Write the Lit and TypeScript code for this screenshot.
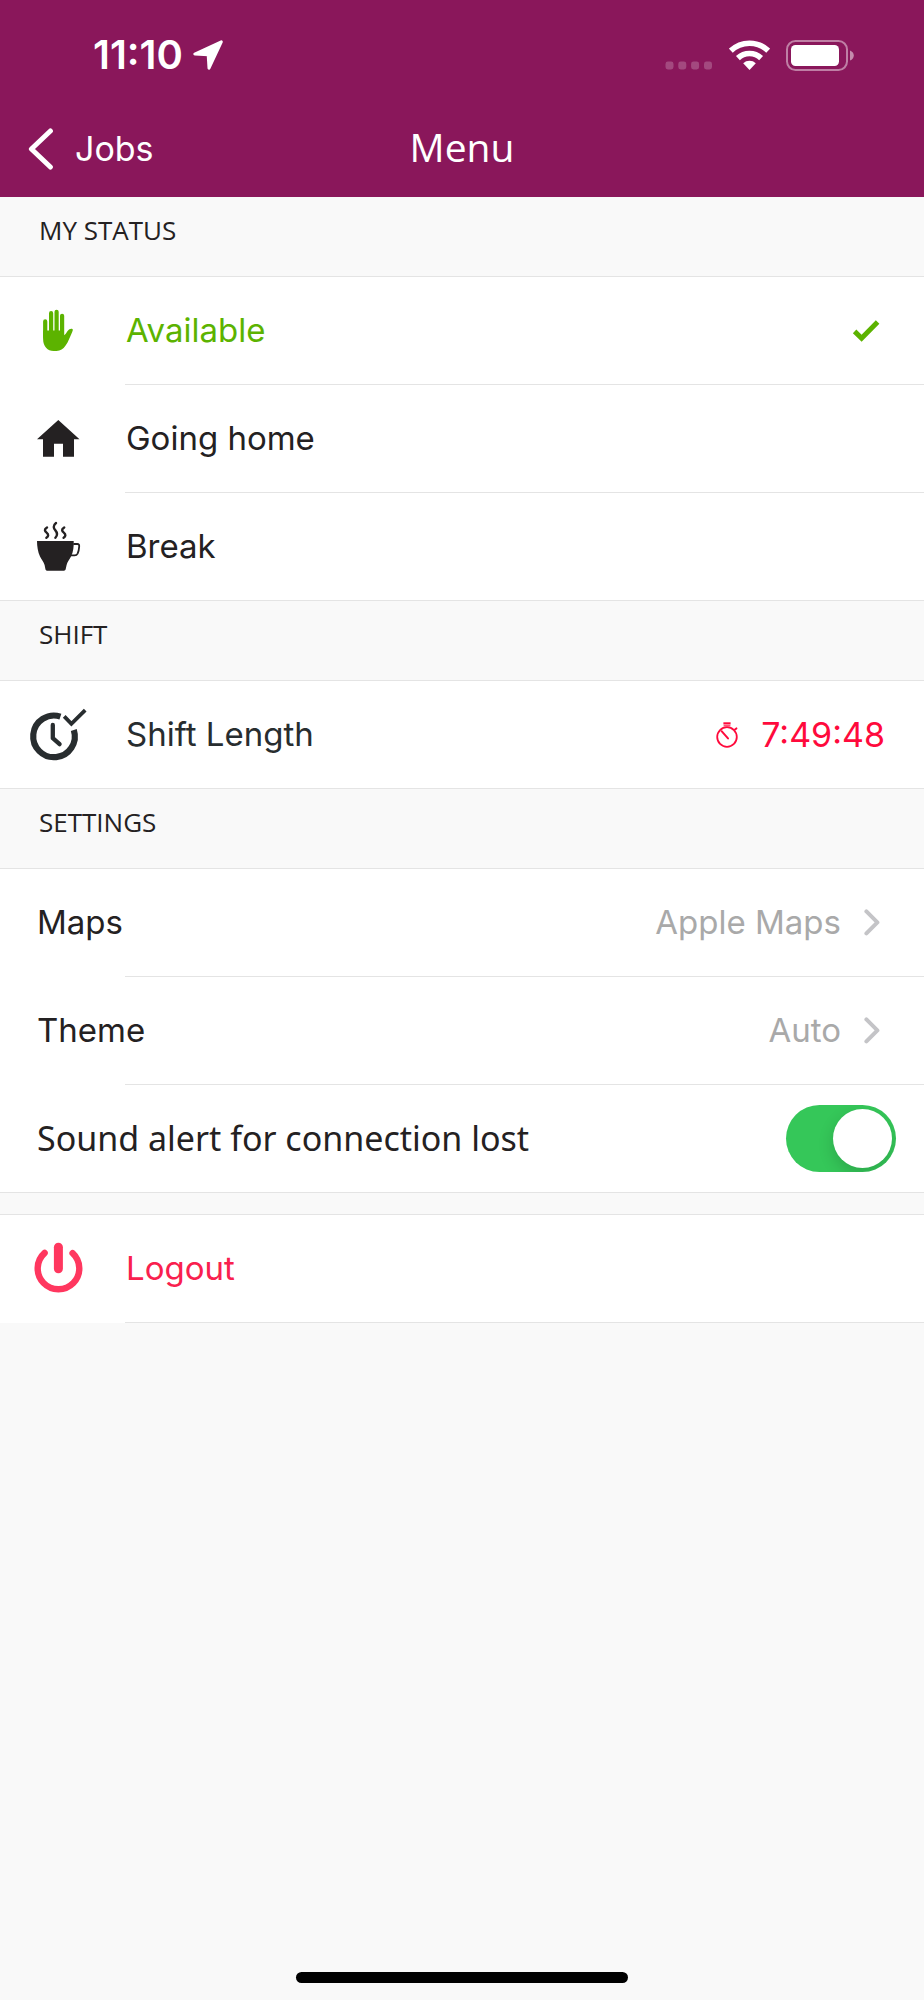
import { LitElement, html, svg, css, nothing } from "lit";
import { customElement, state } from "lit/decorators.js";

const icons = {
  hand: svg`
    <g fill="none" stroke="currentColor" stroke-width="4.2" stroke-linecap="round">
      <path d="M17.2 20.4V36M23.1 12.2V36M28.6 10.8V36M34.1 14.8V36" />
    </g>
    <path fill="currentColor" d="M15.1 29.4H36V34.2C37.4 33.6 38.6 31.6 39.8 29.8C41 28 43 27.4 44.4 28C45.2 28.5 44.7 29.8 44.2 31C42.4 35.2 40.4 40.6 37.6 44.6C35 48.3 32.6 50 28.6 50H25.6C19.6 50 15.1 45.4 15.1 38Z" />`,
  home: svg`<path fill="currentColor" d="M30.3 11L51.5 30.3H46V47.7H35V34.7H26V47.7H15V30.3H9Z" />`,
  cup: svg`
    <path fill="currentColor" d="M9 24H45.7C45.9 29.4 45.4 35 43 39.6C41.4 43 39.4 45 38.6 48L37.6 52.6Q37.3 53.7 36 53.7H19Q17.7 53.7 17.5 52.6L16.6 48C15.6 45 13.6 43 12 39.6C9.9 35 9 29.4 9 24Z" />
    <g fill="none" stroke="currentColor" stroke-linecap="round">
      <path stroke-width="1.8" d="M46 27H49.4Q51.4 27 51.2 29.4C51 32.6 50.4 35 49.6 36.6Q48.6 38.4 46.6 38.4H43.6" />
      <path stroke-width="2.4" d="M19 10.4C15.8 12.4 16.8 14.2 18.6 15.6C20.8 17.4 20.6 19.4 18.4 20.8M28 6C24.6 8.6 25.6 11.4 27.4 13.4C29.6 16 29.4 18.6 27.4 20.8M36.2 10.4C33 12.4 34 14.2 35.8 15.6C38 17.4 37.8 19.4 35.6 20.8" />
    </g>`,
  shift: svg`
    <g fill="none" stroke="currentColor">
      <path stroke-width="6.2" d="M32.4 11.6A20.8 20.8 0 1 0 45.8 25" />
      <path stroke-width="4.3" stroke-linecap="round" stroke-linejoin="round" d="M24.8 20V33.2L31.6 39.2" />
      <path stroke-width="3.8" d="M36.2 11.4L43.4 18.8L57.2 5.2" />
    </g>`,
  power: svg`
    <g fill="none" stroke="currentColor" stroke-linecap="round">
      <path stroke-width="6.4" d="M16.6 14A20.8 20.8 0 1 0 44.6 14.2" />
      <path stroke-width="9" d="M30.4 8.2V29.8" />
    </g>`,
};

type Status = { id: string; label: string; icon: keyof typeof icons };

const STATUSES: Status[] = [
  { id: "available", label: "Available", icon: "hand" },
  { id: "home", label: "Going home", icon: "home" },
  { id: "break", label: "Break", icon: "cup" },
];

const SETTINGS = [
  { label: "Maps", value: "Apple Maps" },
  { label: "Theme", value: "Auto" },
];

const icon = (name: keyof typeof icons) =>
  html`<svg class="icon" viewBox="0 0 60 60" aria-hidden="true">${icons[name]}</svg>`;

@customElement("app-root")
export class AppRoot extends LitElement {
  @state() private status = "available";
  @state() private sound = true;

  static styles = css`
    :host {
      display: flex;
      flex-direction: column;
      min-height: 100vh;
      background: #f9f9f9;
      color: #242122;
      font-family: Inter, "Liberation Sans", sans-serif;
      font-size: 33px;
      line-height: 40px;
    }
    * {
      box-sizing: border-box;
    }
    svg {
      display: block;
      flex: none;
    }
    button,
    a {
      font: inherit;
      color: inherit;
      text-decoration: none;
      border: 0;
      margin: 0;
      cursor: pointer;
    }
    .top {
      background: #8a175b;
      color: #fff;
    }
    .status-bar {
      display: flex;
      align-items: center;
      justify-content: space-between;
      height: 100px;
      padding: 10px 70px 0 93px;
    }
    .time,
    .signals {
      display: flex;
      align-items: center;
    }
    .time {
      gap: 10px;
      font-size: 40px;
      font-weight: 600;
    }
    .signals {
      gap: 16px;
    }
    .nav {
      display: grid;
      grid-template-columns: 1fr auto 1fr;
      align-items: center;
      height: 97px;
      padding: 0 28px;
    }
    .back {
      display: flex;
      align-items: center;
      gap: 21px;
      font-size: 34px;
      justify-self: start;
    }
    .title {
      margin: 0;
      padding-bottom: 3px;
      font: 400 39px/48px "Open Sans", sans-serif;
    }
    .heading {
      margin: 0;
      height: 80px;
      padding: 16px 39px 0;
      border-bottom: 1px solid #e4e4e4;
      font: 400 26px/34px "Open Sans", sans-serif;
    }
    .row {
      display: flex;
      align-items: center;
      width: 100%;
      min-height: 108px;
      padding: 0 44px 1px 28px;
      text-align: left;
      background: linear-gradient(#e4e4e4, #e4e4e4) 125px 100% / 100% 1px no-repeat #fff;
    }
    .group .row:last-child {
      background-position: 0 100%;
    }
    .icon {
      width: 60px;
      height: 60px;
      margin-right: 38px;
    }
    .label,
    .value {
      padding-bottom: 1px;
    }
    .label {
      flex: 1;
    }
    .plain {
      padding-left: 37px;
    }
    .selected {
      color: #5cb300;
    }
    .shift {
      color: #282d2f;
      padding-right: 39px;
    }
    .timer {
      display: flex;
      align-items: center;
      gap: 23px;
      color: #ff0a3c;
      font-size: 34px;
    }
    .value {
      color: #a9a9a9;
      margin-right: 23px;
    }
    .sound {
      padding-right: 28px;
      font-family: "Noto Sans", sans-serif;
      font-size: 34px;
      cursor: pointer;
    }
    .switch {
      appearance: none;
      display: flex;
      align-items: center;
      width: 110px;
      height: 67px;
      margin: 0;
      padding: 4px;
      border-radius: 34px;
      background: #d8d8dc;
      overflow: hidden;
      cursor: pointer;
    }
    .switch::before {
      content: "";
      width: 59px;
      height: 59px;
      border-radius: 50%;
      background: #fff;
      box-shadow: 0 6px 16px rgba(0, 0, 0, 0.16);
    }
    .switch:checked {
      justify-content: flex-end;
      background: #35c759;
    }
    .spacer {
      height: 22px;
      border-bottom: 1px solid #e4e4e4;
    }
    .logout {
      color: #ff375f;
    }
    .logout .label {
      color: #f9204e;
    }
    .indicator {
      width: 36%;
      height: 11px;
      margin: auto auto 17px;
      border-radius: 6px;
      background: #000;
    }
  `;

  private renderTop() {
    return html`
      <header class="top">
        <div class="status-bar">
          <div class="time">
            <span>11:10</span>
            <svg width="30" height="30" viewBox="0 0 30 30" aria-hidden="true">
              <path fill="#fff" stroke="#fff" stroke-width="3" stroke-linejoin="round" d="M28.3 1.8L16 28.2L15.2 14.8L1.8 14Z" />
            </svg>
          </div>
          <div class="signals">
            <svg width="48" height="31" viewBox="0 0 48 31" aria-hidden="true">
              <g fill="#fff" fill-opacity="0.22">
                <rect x="0.5" y="21.5" width="8" height="8" rx="2.4" />
                <rect x="13.3" y="21.5" width="8" height="8" rx="2.4" />
                <rect x="26.1" y="21.5" width="8" height="8" rx="2.4" />
                <rect x="39" y="21.5" width="8" height="8" rx="2.4" />
              </g>
            </svg>
            <svg width="41" height="31" viewBox="0 0 41 31" aria-hidden="true">
              <g fill="none" stroke="#fff" stroke-width="5.6">
                <path d="M1.8 10.7A27 27 0 0 1 39.2 10.7" />
                <path d="M8.9 18.1A16.8 16.8 0 0 1 32.1 18.1" />
              </g>
              <path fill="#fff" d="M20.5 29.9L14.2 23.3A9.2 9.2 0 0 1 26.8 23.3Z" />
            </svg>
            <svg width="68" height="31" viewBox="0 0 68 31" aria-hidden="true">
              <rect x="1" y="1" width="60" height="29" rx="8.5" fill="none" stroke="#fff" stroke-opacity="0.45" stroke-width="2" />
              <rect x="5" y="5" width="48" height="21" rx="4.5" fill="#fff" />
              <path fill="#fff" fill-opacity="0.5" d="M64 10.4C66.4 11.4 67.8 13.2 67.8 15.5S66.4 19.6 64 20.6Z" />
            </svg>
          </div>
        </div>
        <nav class="nav">
          <a class="back" href="#jobs">
            <svg width="26" height="42" viewBox="0 0 26 42" aria-hidden="true">
              <path fill="none" stroke="#fff" stroke-width="5" stroke-linecap="round" stroke-linejoin="round" d="M22.4 3L3.4 21L22.4 39" />
            </svg>
            <span>Jobs</span>
          </a>
          <h1 class="title">Menu</h1>
        </nav>
      </header>
    `;
  }

  private renderStatus({ id, label, icon: name }: Status) {
    const on = this.status === id;
    return html`
      <button
        type="button"
        class="row ${on ? "selected" : ""}"
        aria-pressed=${on}
        @click=${() => (this.status = id)}
      >
        ${icon(name)}
        <span class="label">${label}</span>
        ${on
          ? html`<svg width="28" height="22" viewBox="0 0 28 22" aria-hidden="true">
              <path fill="none" stroke="currentColor" stroke-width="5" d="M2.6 11.4L9.6 18.2L25.6 2" />
            </svg>`
          : nothing}
      </button>
    `;
  }

  render() {
    return html`
      ${this.renderTop()}
      <main>
        <h2 class="heading">MY STATUS</h2>
        <div class="group">${STATUSES.map((s) => this.renderStatus(s))}</div>

        <h2 class="heading">SHIFT</h2>
        <div class="group">
          <div class="row shift">
            ${icon("shift")}
            <span class="label">Shift Length</span>
            <span class="timer">
              <svg width="22" height="28" viewBox="0 0 22 28" aria-hidden="true">
                <g fill="none" stroke="currentColor">
                  <circle cx="11" cy="16" r="9.8" stroke-width="1.8" />
                  <path stroke-width="2.2" d="M7.4 2.4H14.6" />
                  <path stroke-width="1" d="M7.6 4.8H14.4" />
                  <path stroke-width="2" stroke-linecap="round" d="M5.6 10.2L12 17.4M19 8.6L20.4 7.4" />
                </g>
              </svg>
              <span>7:49:48</span>
            </span>
          </div>
        </div>

        <h2 class="heading">SETTINGS</h2>
        <div class="group">
          ${SETTINGS.map(
            (s) => html`
              <button type="button" class="row plain">
                <span class="label">${s.label}</span>
                <span class="value">${s.value}</span>
                <svg width="16" height="27" viewBox="0 0 16 27" aria-hidden="true">
                  <path fill="none" stroke="#c4c4c7" stroke-width="4" stroke-linecap="round" stroke-linejoin="round" d="M2.4 2.4L13.4 13.4L2.4 24.4" />
                </svg>
              </button>
            `
          )}
          <label class="row plain sound">
            <span class="label">Sound alert for connection lost</span>
            <input
              class="switch"
              type="checkbox"
              role="switch"
              .checked=${this.sound}
              @change=${(e: Event) => (this.sound = (e.target as HTMLInputElement).checked)}
            />
          </label>
        </div>
        <div class="spacer"></div>
        <button type="button" class="row logout">
          ${icon("power")}
          <span class="label">Logout</span>
        </button>
      </main>
      <div class="indicator"></div>
    `;
  }
}
